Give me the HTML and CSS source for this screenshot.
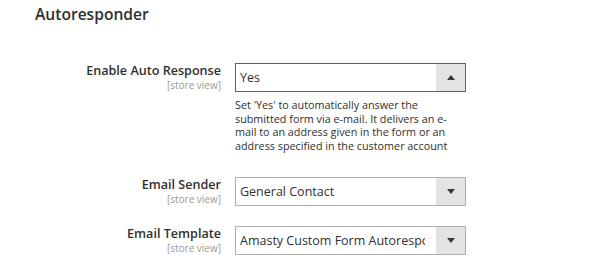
FILE: index.html
```html
<!DOCTYPE html>
<html>
<head>
<meta charset="utf-8">
<link rel="stylesheet" href="styles.css">
</head>
<body>
<div class="section">
  <h2 class="title">Autoresponder</h2>
  <div class="fields">
    <div class="field">
      <div class="label">
        <span class="label-text">Enable Auto Response</span>
        <span class="scope">[store view]</span>
      </div>
      <div class="control">
        <div class="select focused">
          <span class="value">Yes</span>
          <span class="arrow"><span class="tri up"></span></span>
        </div>
        <div class="note">Set 'Yes' to automatically answer the submitted form via e-mail. It delivers an e-mail to an address given in the form or an address specified in the customer account</div>
      </div>
    </div>
    <div class="field">
      <div class="label">
        <span class="label-text">Email Sender</span>
        <span class="scope">[store view]</span>
      </div>
      <div class="control">
        <div class="select">
          <span class="value">General Contact</span>
          <span class="arrow"><span class="tri down"></span></span>
        </div>
      </div>
    </div>
    <div class="field">
      <div class="label">
        <span class="label-text">Email Template</span>
        <span class="scope">[store view]</span>
      </div>
      <div class="control">
        <div class="select">
          <span class="value">Amasty Custom Form Autoresponder</span>
          <span class="arrow"><span class="tri down"></span></span>
        </div>
      </div>
    </div>
  </div>
</div>
</body>
</html>
```
FILE: styles.css
```css
html, body {
  margin: 0;
  padding: 0;
  background: #fff;
}
body {
  font-family: "Open Sans", "Liberation Sans", sans-serif;
  color: #303030;
}
.section {
  padding-left: 35px;
}
.title {
  margin: 3px 0 0 0;
  font-size: 15.6px;
  font-weight: 600;
  line-height: normal;
  color: #303030;
}
.fields {
  margin-top: 38px;
  display: flex;
  flex-direction: column;
}
.field {
  display: grid;
  grid-template-columns: 186px 231px;
  column-gap: 14px;
  margin-bottom: 20px;
}
.field:first-child {
  margin-bottom: 25px;
}
.label {
  display: flex;
  flex-direction: column;
  align-items: flex-end;
  text-align: right;
}
.label-text {
  font-size: 12.6px;
  font-weight: 600;
  line-height: 16px;
  color: #303030;
}
.scope {
  font-size: 10px;
  line-height: 12px;
  color: #999;
}
.select {
  box-sizing: border-box;
  height: 29px;
  border: 1px solid #adadad;
  display: flex;
  align-items: stretch;
  background: #fff;
  overflow: hidden;
}
.select.focused {
  border-color: #007bdb;
}
.value {
  flex: 1;
  min-width: 0;
  margin-left: 4px;
  margin-right: 11px;
  font-size: 12.5px;
  line-height: 27px;
  white-space: nowrap;
  overflow: hidden;
  color: #303030;
}
.arrow {
  width: 29px;
  flex: none;
  background: #e3e3e3;
  display: flex;
  align-items: center;
  justify-content: center;
}
.tri {
  width: 0;
  height: 0;
  border-left: 4px solid transparent;
  border-right: 4px solid transparent;
}
.tri.up {
  border-bottom: 5px solid #41362f;
}
.tri.down {
  border-top: 5px solid #41362f;
}
.note {
  margin-top: 6px;
  font-size: 10.8px;
  line-height: 13.5px;
  color: #303030;
}
```
